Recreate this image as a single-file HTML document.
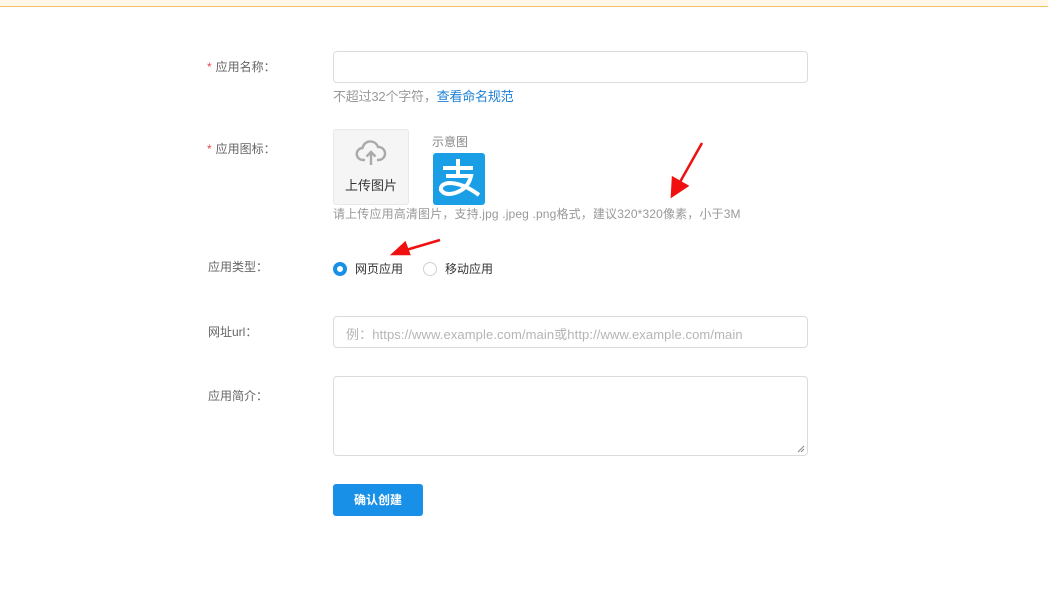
<!DOCTYPE html>
<html><head><meta charset="utf-8"><style>
*{margin:0;padding:0;box-sizing:border-box}
body{width:1048px;height:610px;background:#fff;position:relative;overflow:hidden;font-family:"Liberation Sans","Noto Sans CJK SC",sans-serif;font-size:12px;color:#666}
.a{position:absolute;white-space:nowrap}
.lbl{left:208px;color:#666}
.star{color:#e5484d;margin-right:4px;margin-left:-1px}
.in{position:absolute;left:333px;width:475px;border:1px solid #dcdcdc;border-radius:4px;background:#fff}
</style></head><body>
<div class="a" style="left:0;top:0;width:1048px;height:6px;background:#fff7e8"></div>
<div class="a" style="left:0;top:6px;width:1048px;height:1px;background:#f5c26b"></div>

<div class="a lbl" style="top:58px"><span class="star">*</span>应用名称：</div>
<div class="in" style="top:51px;height:32px"></div>
<div class="a" style="left:333px;top:86px;font-size:13px;color:#999;letter-spacing:-0.2px">不超过32个字符，<span style="color:#1c80d4">查看命名规范</span></div>

<div class="a lbl" style="top:140px"><span class="star">*</span>应用图标：</div>
<div class="a" style="left:333px;top:129px;width:76px;height:76px;background:#f5f5f5;border:1px solid #e8e8e8;border-radius:3px">
<svg style="position:absolute;left:21px;top:9px" width="32" height="28" viewBox="0 0 32 28"><path d="M10 21H8a6 6 0 0 1-.5-12A8 8 0 0 1 23 8a6.5 6.5 0 0 1 1 13h-2" fill="none" stroke="#aaa" stroke-width="2.4"/><path d="M16 26V13M11.5 17.5L16 13l4.5 4.5" fill="none" stroke="#aaa" stroke-width="2.4"/></svg>
<div class="a" style="left:11px;top:45px;font-size:13px;color:#333">上传图片</div></div>
<div class="a" style="left:432px;top:133px;font-size:12px;color:#888">示意图</div>
<div class="a" style="left:433px;top:153px;width:52px;height:52px;background:#1a9ee6;border-radius:3px;overflow:hidden">
<svg width="52" height="52" viewBox="0 0 52 52"><path d="M10 15H40M25 6V21M13 23H38Q35 36 22 40Q12 43 8 37Q7 31 16 30Q30 30 46 42" fill="none" stroke="#fff" stroke-width="4"/></svg></div>
<div class="a" style="left:333px;top:205px;font-size:12px;color:#999;letter-spacing:0.15px">请上传应用高清图片，支持.jpg .jpeg .png格式，建议320*320像素，小于3M</div>

<div class="a lbl" style="top:258px">应用类型：</div>
<div class="a" style="left:333px;top:262px;width:14px;height:14px;border-radius:50%;border:4px solid #1890e8;background:#fff"></div>
<div class="a" style="left:355px;top:260px;color:#333">网页应用</div>
<div class="a" style="left:423px;top:262px;width:14px;height:14px;border-radius:50%;border:1px solid #d0d0d0"></div>
<div class="a" style="left:445px;top:260px;color:#333">移动应用</div>

<div class="a lbl" style="top:323px">网址url：</div>
<div class="in" style="top:316px;height:32px"><div class="a" style="left:12px;top:7px;font-size:13px;color:#b5b5b5;letter-spacing:0.1px">例：https://www.example.com/main或http://www.example.com/main</div></div>

<div class="a lbl" style="top:387px">应用简介：</div>
<div class="in" style="top:376px;height:80px">
<svg style="position:absolute;right:2px;bottom:2px" width="8" height="8"><path d="M1 7L7 1M4 7L7 4" stroke="#888" stroke-width="1"/></svg></div>

<div class="a" style="left:333px;top:484px;width:90px;height:32px;background:#1890e8;border-radius:3px;color:#fff;font-size:12px;font-weight:bold;text-align:center;line-height:32px">确认创建</div>

<svg class="a" style="left:0;top:0" width="1048" height="610"><g stroke="#f01010" stroke-width="2.5" fill="#f01010"><line x1="702" y1="143" x2="680" y2="182"/><path d="M672 196L673 178L687 186Z"/><line x1="440" y1="240" x2="406" y2="250"/><path d="M393 254L405 243L409 254Z"/></g></svg>
</body></html>
